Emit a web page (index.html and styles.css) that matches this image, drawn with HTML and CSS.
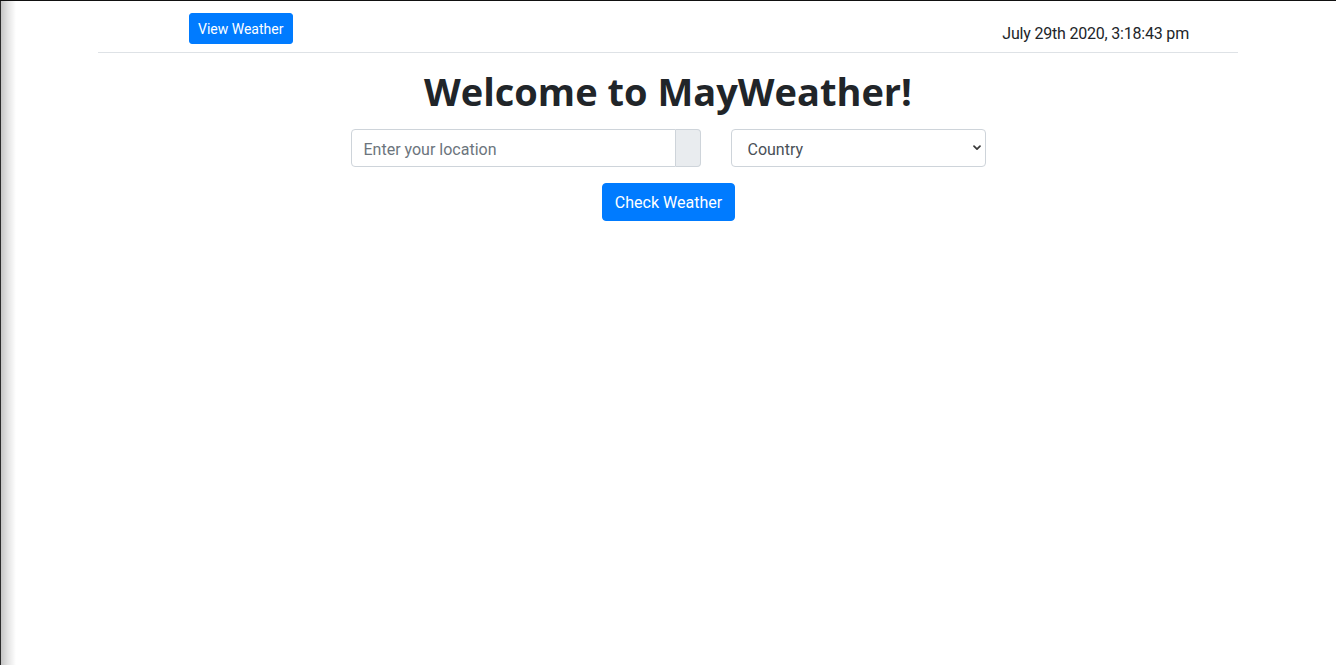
FILE: index.html
```html
<!DOCTYPE html>
<html lang="en">
<head>
<meta charset="utf-8">
<title>MayWeather</title>
<link rel="stylesheet" href="styles.css">
</head>
<body>
<header class="topbar">
  <button class="btn btn-sm">View Weather</button>
  <span class="clock">July 29th 2020, 3:18:43 pm</span>
</header>
<main class="main">
  <h1 class="title">Welcome to MayWeather!</h1>
  <form class="search">
    <div class="input-group">
      <input class="field" type="text" placeholder="Enter your location">
      <span class="addon"></span>
    </div>
    <div class="select-wrap">
      <select class="field select">
        <option>Country</option>
      </select>
      <svg class="chevron" width="8" height="6" viewBox="0 0 8 6"><path d="M1 1.2 L4 4.2 L7 1.2" fill="none" stroke="#3a3a3a" stroke-width="1.7" stroke-linecap="round" stroke-linejoin="round"/></svg>
    </div>
  </form>
  <button class="btn btn-main">Check Weather</button>
</main>
</body>
</html>
```
FILE: styles.css
```css
html {
  border-top: 1px solid #111;
  background: linear-gradient(to right, #2b2b2b 0, #2b2b2b 1px, #c4c4c4 1px, #e4e4e4 8px, #ffffff 16px);
  min-height: 100%;
  box-sizing: border-box;
}
body {
  margin: 0;
  font-family: Roboto, "Liberation Sans", sans-serif;
  font-size: 16px;
  line-height: 1.5;
  color: #212529;
}
.topbar {
  width: 1140px;
  margin: 0 auto;
  box-sizing: border-box;
  display: flex;
  justify-content: space-between;
  align-items: flex-end;
  padding: 12px 49px 8px 91px;
  border-bottom: 1px solid #dee2e6;
}
.clock {
  font-size: 16px;
  line-height: 24px;
  margin-bottom: -2px;
  letter-spacing: -0.2px;
}
.btn {
  font-family: inherit;
  color: #fff;
  background: #007bff;
  border: 1px solid #007bff;
  border-radius: 4px;
  cursor: pointer;
}
.btn-sm {
  font-size: 14px;
  line-height: 21px;
  padding: 5px 9px 3px 8px;
  border-radius: 3px;
}
.main {
  display: flex;
  flex-direction: column;
  align-items: center;
}
.title {
  margin: 14px 0 14px;
  font-family: "Open Sans", sans-serif;
  font-weight: 700;
  font-size: 38px;
  line-height: 48px;
  color: #212529;
}
.search {
  display: flex;
  gap: 30px;
  margin: 0 0 16px;
}
.input-group {
  display: flex;
  width: 350px;
}
.field {
  height: 38px;
  box-sizing: border-box;
  border: 1px solid #ced4da;
  border-radius: 4px;
  padding: 7px 12px 5px;
  font-family: inherit;
  font-size: 16px;
  color: #495057;
  background: #fff;
}
.input-group .field {
  flex: 1;
  min-width: 0;
  border-radius: 4px 0 0 4px;
}
.field::placeholder {
  color: #6c757d;
}
.addon {
  width: 25px;
  box-sizing: border-box;
  border: 1px solid #ced4da;
  border-left: 0;
  border-radius: 0 4px 4px 0;
  background: #e9ecef;
}
.select-wrap {
  position: relative;
  width: 255px;
}
.select {
  width: 100%;
  appearance: none;
  -webkit-appearance: none;
  padding-left: 16px;
}
.chevron {
  position: absolute;
  right: 5px;
  top: 16px;
  pointer-events: none;
}
.btn-main {
  font-size: 16px;
  line-height: 24px;
  padding: 7px 12px 5px;
  margin-left: 1px;
}
```
